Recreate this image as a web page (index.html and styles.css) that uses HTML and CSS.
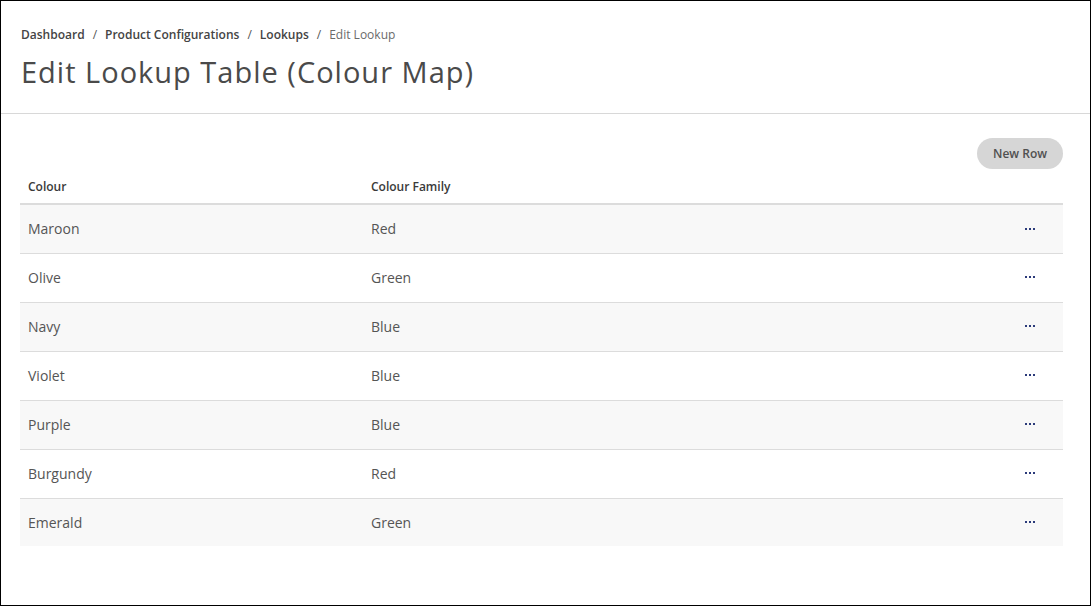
FILE: index.html
```html
<!DOCTYPE html>
<html lang="en">
<head>
<meta charset="utf-8">
<title>Edit Lookup Table (Colour Map)</title>
<link rel="stylesheet" href="styles.css">
</head>
<body>
<div class="frame">
  <header class="page-header">
    <nav class="breadcrumb">
      <a class="crumb">Dashboard</a><span class="sep">/</span>
      <a class="crumb">Product Configurations</a><span class="sep">/</span>
      <a class="crumb">Lookups</a><span class="sep">/</span>
      <span class="crumb current">Edit Lookup</span>
    </nav>
    <h1 class="title">Edit Lookup Table (Colour Map)</h1>
  </header>
  <main class="content">
    <div class="toolbar">
      <button class="btn-new">New Row</button>
    </div>
    <table class="grid">
      <thead>
        <tr><th class="c1">Colour</th><th class="c2">Colour Family</th><th class="c3"></th></tr>
      </thead>
      <tbody>
        <tr><td>Maroon</td><td>Red</td><td class="act"><span class="dots"><i></i><i></i><i></i></span></td></tr>
        <tr><td>Olive</td><td>Green</td><td class="act"><span class="dots"><i></i><i></i><i></i></span></td></tr>
        <tr><td>Navy</td><td>Blue</td><td class="act"><span class="dots"><i></i><i></i><i></i></span></td></tr>
        <tr><td>Violet</td><td>Blue</td><td class="act"><span class="dots"><i></i><i></i><i></i></span></td></tr>
        <tr><td>Purple</td><td>Blue</td><td class="act"><span class="dots"><i></i><i></i><i></i></span></td></tr>
        <tr><td>Burgundy</td><td>Red</td><td class="act"><span class="dots"><i></i><i></i><i></i></span></td></tr>
        <tr><td>Emerald</td><td>Green</td><td class="act"><span class="dots"><i></i><i></i><i></i></span></td></tr>
      </tbody>
    </table>
  </main>
</div>
</body>
</html>
```
FILE: styles.css
```css
* { box-sizing: border-box; }
html, body { margin: 0; padding: 0; background: #fff; }
body { font-family: "Open Sans", "Liberation Sans", sans-serif; color: #555; }

.frame {
  width: 1091px;
  height: 606px;
  border: 1px solid #000;
  overflow: hidden;
}

.page-header {
  height: 113px;
  border-bottom: 1px solid #d8d8d8;
  padding: 25px 20px 0 20px;
}

.breadcrumb {
  font-size: 12px;
  font-weight: 600;
  color: #444;
  line-height: 17px;
  display: flex;
  align-items: center;
}
.crumb { color: #444; text-decoration: none; }
.crumb.current { color: #6a6a6a; font-weight: 500; }
.sep { margin: 0 8px 0 8px; color: #555; font-weight: 400; }

.title {
  margin: 9px 0 0 0;
  font-size: 29px;
  font-weight: 500;
  color: #4a4a4a;
  line-height: 40px;
  letter-spacing: 1px;
}

.content {
  padding: 24px 27px 0 19px;
}

.toolbar {
  display: flex;
  justify-content: flex-end;
  height: 31px;
}

.btn-new {
  height: 31px;
  padding: 0 16px;
  border: none;
  border-radius: 16px;
  background: #d6d6d6;
  color: #505050;
  font-family: "Open Sans", "Liberation Sans", sans-serif;
  font-size: 12px;
  font-weight: 600;
}

.grid {
  width: 100%;
  table-layout: fixed;
  border-collapse: collapse;
  margin-top: 1px;
}
.grid th {
  text-align: left;
  font-size: 12px;
  font-weight: 600;
  color: #3a3a3a;
  height: 34px;
  padding: 0 8px;
  border-bottom: 2px solid #dcdcdc;
}
.grid th.c1 { width: 343px; }
.grid th.c3 { width: 72px; }
.grid td {
  height: 49px;
  padding: 0 8px;
  font-size: 14px;
  color: #555;
  border-bottom: 1px solid #dcdcdc;
}
.grid tbody tr:nth-child(odd) td { background: #f8f8f8; }
.grid tbody tr:last-child td { border-bottom: none; height: 48px; }

.grid td.act { text-align: right; padding-right: 28px; }
.dots { display: inline-flex; gap: 2px; vertical-align: middle; position: relative; top: -2px; }
.dots i { display: block; width: 2px; height: 2px; background: #2b3a7a; }
```
